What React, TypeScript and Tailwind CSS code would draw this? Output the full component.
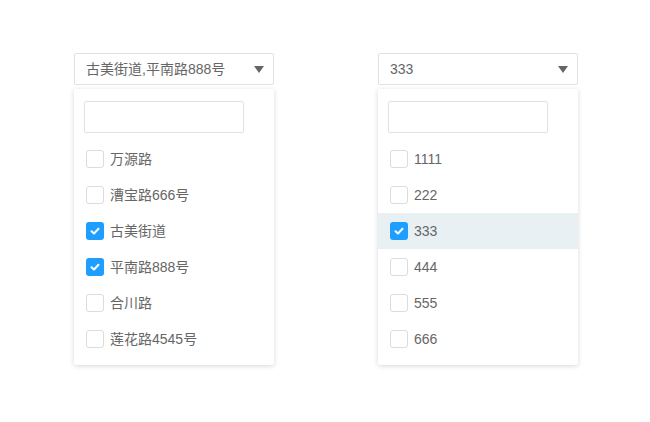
import { useState } from 'react';

type Opt = { label: string; checked?: boolean };

const left: Opt[] = [
  { label: '万源路' },
  { label: '漕宝路666号' },
  { label: '古美街道', checked: true },
  { label: '平南路888号', checked: true },
  { label: '合川路' },
  { label: '莲花路4545号' },
];

const right: Opt[] = [
  { label: '1111' },
  { label: '222' },
  { label: '333', checked: true },
  { label: '444' },
  { label: '555' },
  { label: '666' },
];

function Check({ on }: { on?: boolean }) {
  if (on) {
    return (
      <span className="flex h-[18px] w-[18px] items-center justify-center rounded-[3px] bg-[#1e9fff]">
        <svg width="12" height="12" viewBox="0 0 12 12" fill="none">
          <path d="M2.5 6.2 L5 8.5 L9.5 3.8" stroke="#fff" strokeWidth="2" strokeLinecap="round" strokeLinejoin="round" />
        </svg>
      </span>
    );
  }
  return <span className="h-[18px] w-[18px] rounded-[3px] border border-[#dcdcdc] bg-white" />;
}

function MultiSelect({ value, options, highlight }: { value: string; options: Opt[]; highlight?: number }) {
  const [q, setQ] = useState('');
  return (
    <div className="w-[200px]">
      <div className="flex h-[32px] items-center justify-between rounded-[2px] border border-[#e2e2e2] bg-white pl-[11px] pr-[9px] text-[14px] text-[#666]">
        <span>{value}</span>
        <span className="h-0 w-0 border-x-[5px] border-t-[7px] border-x-transparent border-t-[#666]" />
      </div>
      <div className="mt-[4px] rounded-[2px] bg-white pt-[12px] pb-[8px] shadow-[0_1px_5px_rgba(0,0,0,0.16)]">
        <input
          value={q}
          onChange={(e) => setQ(e.target.value)}
          className="ml-[10px] block h-[32px] w-[160px] rounded-[2px] border border-[#e2e2e2] px-2 text-[14px] outline-none"
        />
        <ul className="mt-[8px]">
          {options.map((o, i) => (
            <li
              key={o.label}
              className={`flex h-[36px] items-center gap-[6px] pl-[12px] text-[14px] text-[#666] ${i === highlight ? 'bg-[#e9f0f4]' : ''}`}
            >
              <Check on={o.checked} />
              <span>{o.label}</span>
            </li>
          ))}
        </ul>
      </div>
    </div>
  );
}

export default function App() {
  return (
    <div className="flex h-[422px] w-[650px] gap-[104px] bg-white pl-[74px] pt-[53px] font-['Liberation_Sans','Noto_Sans_CJK_SC',sans-serif]">
      <MultiSelect value="古美街道,平南路888号" options={left} />
      <MultiSelect value="333" options={right} highlight={2} />
    </div>
  );
}
